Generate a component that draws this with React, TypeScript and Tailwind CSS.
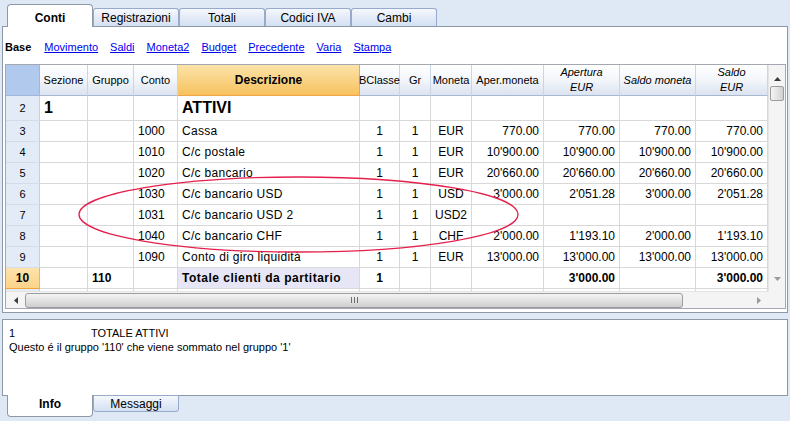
import React from "react";

const cols =
  "grid grid-cols-[34px_48px_46px_44px_182px_40px_31px_41px_72px_76px_76px_72px]";

type Row = {
  n: string;
  conto: string;
  descr: string;
  mon: string;
  v: string[];
};

const rows: Row[] = [
  { n: "3", conto: "1000", descr: "Cassa", mon: "EUR", v: ["770.00", "770.00", "770.00", "770.00"] },
  { n: "4", conto: "1010", descr: "C/c postale", mon: "EUR", v: ["10'900.00", "10'900.00", "10'900.00", "10'900.00"] },
  { n: "5", conto: "1020", descr: "C/c bancario", mon: "EUR", v: ["20'660.00", "20'660.00", "20'660.00", "20'660.00"] },
  { n: "6", conto: "1030", descr: "C/c bancario USD", mon: "USD", v: ["3'000.00", "2'051.28", "3'000.00", "2'051.28"] },
  { n: "7", conto: "1031", descr: "C/c bancario USD 2", mon: "USD2", v: ["", "", "", ""] },
  { n: "8", conto: "1040", descr: "C/c bancario CHF", mon: "CHF", v: ["2'000.00", "1'193.10", "2'000.00", "1'193.10"] },
  { n: "9", conto: "1090", descr: "Conto di giro liquidità", mon: "EUR", v: ["13'000.00", "13'000.00", "13'000.00", "13'000.00"] },
];

const links = ["Movimento", "Saldi", "Moneta2", "Budget", "Precedente", "Varia", "Stampa"];

const cell = "flex items-center border-r border-b border-[#d8d8d8] px-[4px] overflow-hidden whitespace-nowrap";
const hcell =
  "flex items-center justify-center text-center border-r border-b border-r-[#c9d4e4] border-b-[#a9b9d2] bg-gradient-to-b from-white via-[#f3f6fb] to-[#dbe3ef] text-[11px] leading-[15px] text-black";

function Tab({ label, active }: { label: string; active?: boolean }) {
  if (active)
    return (
      <div className="relative z-10 -mb-px flex h-[23px] w-[86px] items-start justify-center rounded-t-[4px] border border-b-0 border-[#8e99a8] bg-white pt-[4px] text-[12px] font-bold">
        {label}
      </div>
    );
  return (
    <div className="flex h-[18px] w-[86px] items-center justify-center rounded-t-[3px] border border-b-0 border-[#97aacb] bg-gradient-to-b from-[#f5f8fd] to-[#d3dff2] text-[12px]">
      {label}
    </div>
  );
}

function Arrow({ dir, light }: { dir: "up" | "down" | "left" | "right"; light?: boolean }) {
  const pts = {
    up: "0,4 3.5,0 7,4",
    down: "0,0 3.5,4 7,0",
    left: "4,0 0,3.5 4,7",
    right: "0,0 4,3.5 0,7",
  }[dir];
  const vertical = dir === "up" || dir === "down";
  return (
    <svg width={vertical ? 7 : 4} height={vertical ? 4 : 7} viewBox={vertical ? "0 0 7 4" : "0 0 4 7"}>
      <polygon points={pts} fill={light ? "#9a9a9a" : "#3c3c3c"} />
    </svg>
  );
}

export default function App() {
  return (
    <div className="relative h-[421px] w-[790px] overflow-hidden bg-[#dfe8f5] font-['Liberation_Sans',Arial,sans-serif] text-black">
      {/* top tabs */}
      <div className="flex h-[26px] items-end pl-[7px]">
        <Tab label="Conti" active />
        <Tab label="Registrazioni" />
        <Tab label="Totali" />
        <Tab label="Codici IVA" />
        <Tab label="Cambi" />
      </div>

      {/* main panel */}
      <div className="ml-[2px] h-[287px] w-[786px] border border-[#8e99a8] bg-white">
        <div className="flex h-[37px] items-center gap-[12px] pl-[2px] pt-[4px] text-[11px]">
          <span className="mr-[1px] font-bold">Base</span>
          {links.map((l) => (
            <span key={l} className="text-[#0000ee] underline">
              {l}
            </span>
          ))}
        </div>

        <div className="ml-[2px] flex h-[245px] w-[781px] border border-[#a3a8b0]">
          <div className="flex w-[762px] flex-col">
            <div className="h-[226px] overflow-hidden text-[12px]">
              {/* header */}
              <div className={`${cols} h-[31px]`}>
                <div className="border-r border-b border-r-[#9fb6da] border-b-[#9fb6da] bg-[#b0c9ed]" />
                <div className={hcell}>Sezione</div>
                <div className={hcell}>Gruppo</div>
                <div className={hcell}>Conto</div>
                <div className="flex items-center justify-center border-r border-b border-[#eda54a] bg-gradient-to-b from-[#fbe3a8] to-[#f7c25c] text-[12px] font-bold">
                  Descrizione
                </div>
                <div className={hcell}>BClasse</div>
                <div className={hcell}>Gr</div>
                <div className={hcell}>Moneta</div>
                <div className={hcell}>Aper.moneta</div>
                <div className={`${hcell} italic text-[#333]`}>
                  Apertura
                  <br />
                  EUR
                </div>
                <div className={`${hcell} italic text-[#333]`}>Saldo moneta</div>
                <div className={`${hcell} italic text-[#333]`}>
                  Saldo
                  <br />
                  EUR
                </div>
              </div>

              {/* row 2 */}
              <div className={`${cols} h-[25px]`}>
                <div className="flex items-center justify-center border-r border-b border-r-[#c3d0e3] border-b-[#d3dcea] bg-[#e3ebf6] text-[11px]">
                  2
                </div>
                <div className={`${cell} text-[16px] font-bold`}>1</div>
                <div className={cell} />
                <div className={cell} />
                <div className={`${cell} text-[16px] font-bold`}>ATTIVI</div>
                <div className={cell} />
                <div className={cell} />
                <div className={cell} />
                <div className={cell} />
                <div className={cell} />
                <div className={cell} />
                <div className={cell} />
              </div>

              {rows.map((r) => (
                <div key={r.n} className={`${cols} h-[21px]`}>
                  <div className="flex items-center justify-center border-r border-b border-r-[#c3d0e3] border-b-[#d3dcea] bg-[#e3ebf6] text-[11px]">
                    {r.n}
                  </div>
                  <div className={cell} />
                  <div className={cell} />
                  <div className={cell}>{r.conto}</div>
                  <div className={`${cell} tracking-[0.3px]`}>{r.descr}</div>
                  <div className={`${cell} justify-center`}>1</div>
                  <div className={`${cell} justify-center`}>1</div>
                  <div className={`${cell} justify-center`}>{r.mon}</div>
                  {r.v.map((x, i) => (
                    <div key={i} className={`${cell} justify-end`}>
                      {x}
                    </div>
                  ))}
                </div>
              ))}

              {/* row 10 */}
              <div className={`${cols} h-[21px] font-bold`}>
                <div className="flex items-center justify-center border-r border-b border-r-[#e8b560] border-b-[#f2a33a] bg-gradient-to-b from-[#fde3aa] to-[#fcd38a] text-[12px]">
                  10
                </div>
                <div className={cell} />
                <div className={cell}>110</div>
                <div className={cell} />
                <div className={`${cell} bg-[#e6e6f6] tracking-[0.5px]`}>Totale clienti da partitario</div>
                <div className={`${cell} justify-center`}>1</div>
                <div className={cell} />
                <div className={cell} />
                <div className={cell} />
                <div className={`${cell} justify-end`}>3'000.00</div>
                <div className={cell} />
                <div className={`${cell} justify-end`}>3'000.00</div>
              </div>
              <div className={`${cols} h-[4px]`}>
                <div className="border-r border-[#c3d0e3] bg-[#e3ebf6]" />
                {Array.from({ length: 11 }).map((_, i) => (
                  <div key={i} className="border-r border-[#d8d8d8]" />
                ))}
              </div>
            </div>

            {/* horizontal scrollbar */}
            <div className="flex h-[17px] items-center border-t border-[#e4e4e4] bg-[#f4f4f4]">
              <div className="flex w-[19px] justify-center">
                <Arrow dir="left" />
              </div>
              <div className="flex h-[15px] w-[658px] items-center justify-center rounded-[3px] border border-[#9c9c9c] bg-gradient-to-b from-[#f4f4f4] via-[#e2e2e2] to-[#cfcfcf]">
                <div className="flex gap-[2px]">
                  <div className="h-[6px] w-px bg-[#6f6f6f]" />
                  <div className="h-[6px] w-px bg-[#6f6f6f]" />
                  <div className="h-[6px] w-px bg-[#6f6f6f]" />
                </div>
              </div>
              <div className="flex flex-1 justify-end pr-[7px]">
                <Arrow dir="right" light />
              </div>
            </div>
          </div>

          {/* vertical scrollbar */}
          <div className="flex w-[17px] flex-col">
            <div className="flex h-[226px] flex-col items-center border-l border-[#e4e4e4] bg-[#f4f4f4]">
              <div className="flex h-[20px] items-end justify-center pb-[4px]">
                <Arrow dir="up" />
              </div>
              <div className="mt-[1px] h-[15px] w-[14px] rounded-[2px] border border-[#9c9c9c] bg-gradient-to-r from-[#f4f4f4] via-[#e4e4e4] to-[#d0d0d0]" />
              <div className="flex-1" />
              <div className="flex h-[16px] items-start justify-center pt-[2px]">
                <Arrow dir="down" light />
              </div>
            </div>
            <div className="flex-1 bg-[#f4f4f4]" />
          </div>
        </div>
      </div>

      {/* info panel */}
      <div className="ml-[2px] mt-[6px] h-[77px] w-[786px] border border-[#8e99a8] bg-white px-[6px] pt-[6px] text-[11px] leading-[14px]">
        <div className="flex">
          <span className="w-[82px]">1</span>
          <span>TOTALE ATTIVI</span>
        </div>
        <div>Questo é il gruppo '110' che viene sommato nel gruppo '1'</div>
      </div>

      {/* bottom tabs */}
      <div className="flex items-start pl-[7px]">
        <div className="relative z-10 -mt-px flex h-[22px] w-[86px] items-end justify-center rounded-b-[4px] border border-t-0 border-[#8e99a8] bg-white pb-[3px] text-[12px] font-bold">
          Info
        </div>
        <div className="-mt-px flex h-[17px] w-[86px] items-center justify-center rounded-b-[3px] border border-[#97aacb] bg-gradient-to-b from-[#f5f8fd] to-[#d3dff2] text-[12px]">
          Messaggi
        </div>
      </div>

      {/* red ellipse annotation */}
      <svg className="pointer-events-none absolute left-0 top-0" width="790" height="421">
        <ellipse cx="298.5" cy="214.5" rx="219.5" ry="37.5" fill="none" stroke="#e6204c" strokeWidth="1.3" />
      </svg>
    </div>
  );
}
